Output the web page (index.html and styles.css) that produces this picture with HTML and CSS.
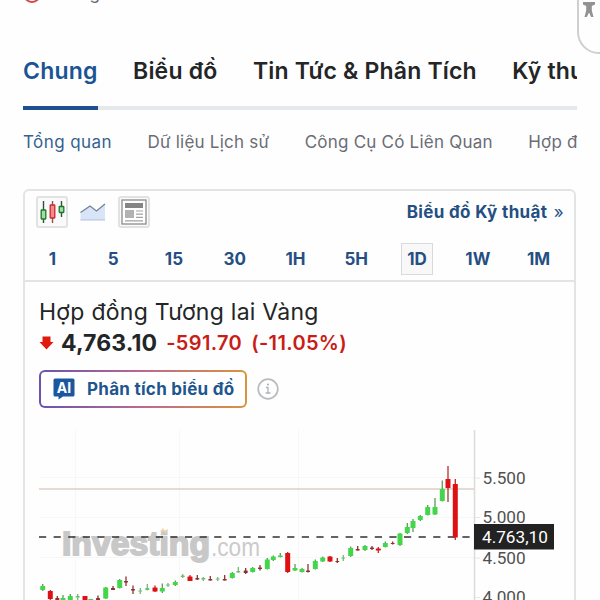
FILE: index.html
```html
<!DOCTYPE html>
<html lang="vi">
<head>
  <meta charset="UTF-8" />
  <meta name="viewport" content="width=device-width, initial-scale=1.0"/>
  <title>Hợp đồng Tương lai Vàng</title>
  <link rel="stylesheet" href="styles.css">
</head>
<body>
  <div class="page">
    <div class="status">
      <span class="status-icon"></span>
      <span class="status-text">Đóng cửa</span>
    </div>

    <nav class="tabs">
      <a class="tab active">Chung</a>
      <a class="tab">Biểu đồ</a>
      <a class="tab">Tin Tức &amp; Phân Tích</a>
      <a class="tab">Kỹ thuật</a>
    </nav>

    <nav class="subtabs">
      <a class="subtab active">Tổng quan</a>
      <a class="subtab">Dữ liệu Lịch sử</a>
      <a class="subtab">Công Cụ Có Liên Quan</a>
      <a class="subtab">Hợp đồng</a>
    </nav>

    <div class="card">
      <div class="toolbar">
        <div class="tool boxed">
          <svg width="28" height="28" viewBox="0 0 28 28">
            <path d="M5.500 3v22M23.500 3v16" stroke="#34503a" stroke-width="1.400"/>
            <path d="M14.500 3v22" stroke="#8f5257" stroke-width="1.400"/>
            <rect x="3.200" y="12" width="4.600" height="9" rx="0.500" fill="#a4dca4" stroke="#187a28" stroke-width="1.300"/>
            <rect x="12.200" y="7" width="4.600" height="13" rx="0.500" fill="#f28a8e" stroke="#ca2730" stroke-width="1.300"/>
            <rect x="21.200" y="8.500" width="4.600" height="6" rx="0.500" fill="#a4dca4" stroke="#187a28" stroke-width="1.300"/>
          </svg>
        </div>
        <div class="tool">
          <svg width="28" height="28" viewBox="0 0 28 28">
            <path d="M1.500 14.500L11 8l6.500 5L26 6v16.500H1.500z" fill="#d9e4f7"/>
            <path d="M1.500 21.800H26" stroke="#bdcce6" stroke-width="1.200"/>
            <path d="M1.500 14.500L11 8l6.500 5L26 6" fill="none" stroke="#71839c" stroke-width="1.300"/>
          </svg>
        </div>
        <div class="tool boxed">
          <svg width="28" height="28" viewBox="0 0 28 28">
            <rect x="2" y="2" width="24" height="24" fill="#fff" stroke="#8c8c8c" stroke-width="1.300"/>
            <rect x="5" y="5" width="18" height="5" fill="#858585"/>
            <rect x="5" y="12" width="9" height="8" fill="#b2b2b2"/>
            <path d="M16 13h7M16 16.200h7M16 19.400h7M5 22.800h18" stroke="#a3a3a3" stroke-width="1.200"/>
          </svg>
        </div>
        <a class="tech-link">Biểu đồ Kỹ thuật <span class="raquo">»</span></a>
      </div>

      <div class="frames">
        <span class="frame">1</span>
        <span class="frame">5</span>
        <span class="frame">15</span>
        <span class="frame">30</span>
        <span class="frame">1H</span>
        <span class="frame">5H</span>
        <span class="frame selected">1D</span>
        <span class="frame">1W</span>
        <span class="frame">1M</span>
      </div>

      <div class="quote">
        <div class="name">Hợp đồng Tương lai Vàng</div>
        <div class="price-row">
          <svg class="arrow" width="15" height="14" viewBox="0 0 14 14">
            <path d="M3 0.500h8V6H14L7 13.500 0 6h3z" fill="#e01b0c"/>
          </svg>
          <span class="price">4,763.10</span>
          <span class="change">-591.70</span>
          <span class="percent">(-11.05%)</span>
        </div>
        <div class="ai-row">
          <button class="ai-btn">
            <svg width="22" height="22" viewBox="0 0 22 22">
              <path d="M2 0.500h18a1.500 1.500 0 0 1 1.500 1.500v15a1.500 1.500 0 0 1-1.500 1.500H10L5.500 21.500v-3H2A1.500 1.500 0 0 1 .5 17V2A1.500 1.500 0 0 1 2 .5z" fill="#1b579f"/>
              <text class="ai-mark" x="11" y="15" text-anchor="middle">AI</text>
            </svg>
            <span>Phân tích biểu đồ</span>
          </button>
          <svg width="22" height="22" viewBox="0 0 22 22">
            <circle cx="11" cy="11" r="9.800" fill="none" stroke="#b9bcbf" stroke-width="1.700"/>
            <path d="M9 9.500h2v5.500M8.700 15h4.800" fill="none" stroke="#b0b3b6" stroke-width="1.300"/>
            <circle cx="11" cy="6.500" r="1.100" fill="#b0b3b6"/>
          </svg>
        </div>
      </div>

      <svg class="chart" width="536" height="172" viewBox="39 428 536 172">
        <path d="M39 477.500H474M39 517.500H474M39 557.500H474M75.500 430V600M179.500 430V600M298.500 430V600" stroke="#f7f7f7"/>
        <path d="M39 489H474" stroke="#dccfc6" stroke-width="1.600"/>
        <text class="logo" x="62" y="555" textLength="148" lengthAdjust="spacingAndGlyphs">Investing</text>
        <text class="logo-com" x="211" y="555.500" textLength="49" lengthAdjust="spacingAndGlyphs">.com</text>
        <path d="M161 532l2-3 1 2 3-1-2 3" fill="none" stroke="#f6d3b2" stroke-width="1.200"/>
        <path d="M39 537H474" stroke="#303030" stroke-width="1.600" stroke-dasharray="7.200 7.400"/>
        <g id="candles"></g>
        <path d="M474.500 430V600" stroke="#dcdcdc" stroke-width="1.600"/>
        <path d="M475 478h5M475 517.500h5M475 558h5M475 597.500h5" stroke="#e6e6e6"/>
        <text class="axis" x="482.500" y="483.500">5.500</text>
        <text class="axis" x="482.500" y="522.500">5.000</text>
        <text class="axis" x="482.500" y="563.500">4.500</text>
        <text class="axis" x="482.500" y="603">4.000</text>
        <rect x="474" y="524" width="80" height="25.500" fill="#222"/>
        <text class="axis now" x="482" y="543.200">4.763,10</text>
      </svg>
    </div>
  </div>

  <div class="side-widget">
    <svg width="14" height="16" viewBox="0 0 14 16">
      <path d="M1 0v2.500L4.200 4v4.500L2.500 15h2.300L7 10.500 9.200 15h2.300L9.800 8.500V4L13 2.500V0z" fill="#929292"/>
    </svg>
  </div>

  <script>
    const colors = { g: "#44d64a", r: "#df1014", d: "#8f3030", t: "#70bd72" };
    const wicks = { g: "#5c9a58", r: "#b03030", d: "#8f3030", t: "#70bd72" };

    // x, body top, body bottom, wick top, wick bottom, color
    const candles = [
      [42.7, 586, 590, 584, 591, "g"], [50.3, 591, 599, 590, 600, "r"],
      [57.3, 598, 600, 596, 600, "d"], [63, 598, 600, 595, 600, "g"],
      [70.3, 596, 600, 594, 600, "g"], [77.7, 596, 597.5, 594, 600, "t"],
      [85, 596, 600, 596, 600, "r"], [90.7, 599, 600, 599, 600, "g"],
      [98, 598, 600, 595.5, 600, "d"], [105.7, 587.5, 598.5, 587, 599, "g"],
      [113, 588, 590, 586, 590, "d"], [119.7, 580, 588, 579, 588.5, "g"],
      [126, 581, 582.5, 576.5, 586, "d"], [133, 589, 590.5, 585.5, 594, "d"],
      [140.3, 590.5, 591.5, 588, 594, "t"], [147.3, 588, 590, 584, 590.5, "t"],
      [155, 587.5, 591.5, 585.5, 592, "r"], [162.3, 588, 591.5, 583.5, 593, "g"],
      [168, 584.5, 585.5, 583, 587, "t"], [175.3, 582, 585, 580.5, 586, "g"],
      [182.7, 575.5, 577, 574, 578, "t"], [190, 576.5, 581, 575, 581, "r"],
      [197.3, 578, 579.5, 575, 580, "d"], [203.3, 578, 579.5, 577, 581, "t"],
      [210.3, 579, 580.5, 576, 580.5, "d"], [217.7, 578.5, 579.5, 577, 581, "t"],
      [224.7, 579, 580.5, 575, 580.5, "d"], [232.3, 573, 578, 572, 578.5, "g"],
      [238.3, 571, 572.5, 567, 572.5, "t"], [245.7, 570.5, 573, 568, 574, "d"],
      [252.7, 568, 572, 567, 572.5, "g"], [260, 567.5, 569, 565, 570.5, "d"],
      [267.3, 559.5, 569, 558, 569.5, "g"], [273.3, 556.5, 560, 555.5, 561, "g"],
      [280.3, 555.5, 557, 553, 557.5, "g"], [287.7, 553, 572, 552, 573, "r"],
      [295, 568, 570.5, 564, 571, "g"], [302, 569, 572, 568, 572.5, "g"],
      [308, 570.5, 572, 564, 572.5, "d"], [315.3, 561, 569, 559.5, 569.5, "g"],
      [322.7, 557.5, 561.5, 556.5, 562, "g"], [330, 556.5, 561.5, 556, 562, "r"],
      [337.3, 561, 562, 558, 563, "d"], [343.3, 557.5, 558.5, 555, 561, "t"],
      [350.7, 548, 556, 546.5, 557, "g"], [357.7, 549, 550.5, 546, 550.5, "d"],
      [365, 546, 550, 545, 551, "g"], [372, 547.5, 549, 546, 550, "d"],
      [378.3, 548.5, 550.5, 547, 553, "r"], [385.3, 543, 547, 541.5, 547.5, "g"],
      [392.7, 543, 544, 541.5, 544.5, "d"], [400, 533.5, 545, 533, 546, "g"],
      [407.3, 527, 533, 523, 534, "g"], [413, 521, 528, 519, 532, "g"],
      [420.3, 516, 520, 515, 521, "g"], [427.7, 507, 515, 505, 515.5, "g"],
      [435, 507, 514.5, 498, 515, "g"], [442.3, 489, 501, 480.5, 501.5, "g"],
      [448, 479, 488, 466, 502, "r"], [455.3, 484, 537.5, 479, 540, "r"]
    ];

    const layer = document.getElementById("candles");
    candles.forEach(([x, top, bottom, high, low, c]) => {
      const w = c === "g" || c === "r" ? 5 : 4;
      layer.innerHTML += `<path d="M${x} ${high}V${low}" stroke="${wicks[c]}" stroke-width="1.3"/>
        <rect x="${x - w / 2}" y="${top}" width="${w}" height="${bottom - top}" rx="0.5" fill="${colors[c]}"/>`;
    });
  </script>
</body>
</html>
```
FILE: styles.css
```css
* {
  box-sizing: border-box;
}

body {
  margin: 0;
  height: 600px;
  overflow: hidden;
  background: #fefefe;
  font-family: Inter, "Liberation Sans", sans-serif;
  color: #232526;
}

.page {
  width: 577px;
  height: 600px;
  padding-left: 23px;
  overflow: hidden;
}

.status {
  height: 41px;
  display: flex;
  gap: 16px;
  font-size: 17px;
  color: #6a707c;
}

.status-icon {
  width: 18px;
  height: 18px;
  margin-top: -15px;
  border: 2px solid #d0484a;
  border-radius: 50%;
}

.status-text {
  margin-top: -17px;
  line-height: 21px;
}

.tabs {
  height: 69px;
  display: flex;
  gap: 35.500px;
  overflow: hidden;
  box-shadow: inset 0 -4px #e6e9eb;
}

.tab {
  flex: none;
  height: 69px;
  line-height: 60px;
  font-size: 23px;
  font-weight: 600;
  letter-spacing: 0.190px;
  white-space: nowrap;
}

.tab.active {
  color: #1a5495;
  border-bottom: 4px solid #1d4f91;
}

.subtabs {
  height: 79px;
  display: flex;
  gap: 35.500px;
  overflow: hidden;
}

.subtab {
  flex: none;
  line-height: 64px;
  font-size: 17px;
  letter-spacing: 0.220px;
  color: #6a6d75;
  white-space: nowrap;
}

.subtab.active {
  letter-spacing: 0.430px;
  color: #34638f;
}

.card {
  width: 553px;
  height: 430px;
  border: 2px solid #e3e4e6;
  border-radius: 6px;
}

.toolbar {
  height: 44px;
  padding: 5px 10px 0 11px;
  display: flex;
  gap: 9px;
}

.tool {
  width: 32px;
  height: 32px;
  display: flex;
  align-items: center;
  justify-content: center;
}

.tool.boxed {
  border: 2px solid #e2e2e2;
  border-radius: 3px;
  background: #fafafa;
}

.tool.boxed svg {
  flex: none;
}

.tech-link {
  margin-left: auto;
  line-height: 32px;
  font-size: 17px;
  font-weight: 700;
  letter-spacing: 0.350px;
  color: #254f82;
}

.raquo {
  margin-left: 2px;
  font-weight: 400;
}

.frames {
  height: 45px;
  padding-top: 8px;
  margin: 0 5px 0 -3px;
  display: grid;
  grid-template-columns: repeat(9, 1fr);
  align-items: start;
  justify-items: center;
}

.frame {
  width: 32px;
  line-height: 32px;
  text-align: center;
  font-size: 17px;
  font-weight: 700;
  color: #254f82;
}

.frame.selected {
  line-height: 30px;
  border: 1px solid #d9dadc;
  background: #f8f8f8;
}

.quote {
  height: 148px;
  border-top: 2px solid #e3e4e6;
  padding: 14px 14px 0;
}

.name {
  line-height: 33px;
  font-size: 23px;
  letter-spacing: 0.260px;
  white-space: nowrap;
}

.price-row {
  height: 28px;
  display: flex;
  align-items: center;
  white-space: nowrap;
}

.price {
  margin-left: 7px;
  font-size: 23px;
  font-weight: 700;
  letter-spacing: 0.120px;
}

.change,
.percent {
  margin-left: 9px;
  font-size: 20px;
  font-weight: 600;
  letter-spacing: 0.350px;
  color: #c91d17;
}

.ai-row {
  margin-top: 13px;
  display: flex;
  align-items: center;
  gap: 10px;
}

.ai-btn {
  width: 208px;
  height: 38px;
  padding: 0 0 0 12px;
  display: flex;
  align-items: center;
  gap: 12px;
  border: 2px solid transparent;
  border-radius: 6px;
  background: linear-gradient(#fff, #fff) padding-box,
              linear-gradient(90deg, #6954ac, #bd6990 50%, #d7953d) border-box;
  font-family: inherit;
  font-size: 17px;
  font-weight: 700;
  letter-spacing: 0.280px;
  color: #20568f;
  white-space: nowrap;
}

.ai-mark {
  font-size: 14px;
  font-weight: 700;
  letter-spacing: 0;
  fill: #fff;
}

.chart {
  display: block;
  margin-left: 14px;
}

.logo {
  font: 700 33px "Liberation Sans", sans-serif;
  fill: #c8c8c8;
  stroke: #c8c8c8;
  stroke-width: 1.800;
}

.logo-com {
  font: 400 25px "Liberation Sans", sans-serif;
  fill: #cbcbcb;
}

.axis {
  font: 400 17.200px Roboto, sans-serif;
  fill: #505050;
}

.axis.now {
  fill: #fff;
}

.side-widget {
  position: absolute;
  top: -10px;
  right: -20px;
  width: 43px;
  height: 64px;
  padding: 10px 0 0 3px;
  border: 2px solid #cfcfcf;
  border-radius: 0 0 0 22px;
  background: #fefefe;
}
```
